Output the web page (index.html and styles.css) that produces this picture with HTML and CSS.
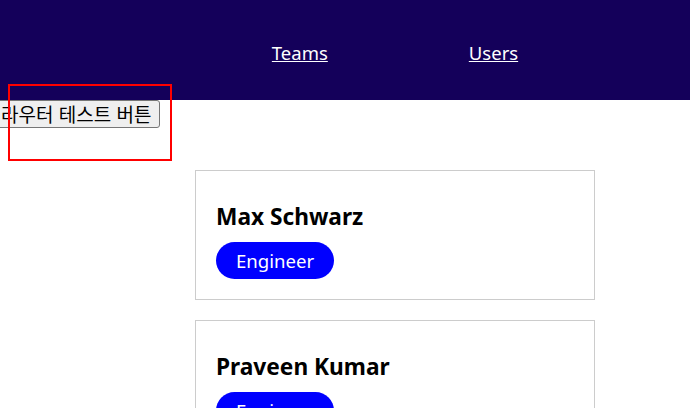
FILE: index.html
```html
<!DOCTYPE html>
<html lang="ko">
<head>
	<meta charset="UTF-8">
	<title>Users</title>
	<link rel="stylesheet" href="styles.css">
</head>
<body>
	<div class="page">
		<header class="header">
			<nav>
				<ul class="nav-list">
					<li><a href="#">Teams</a></li>
					<li><a href="#">Users</a></li>
				</ul>
			</nav>
		</header>
		<button class="test-btn">라우터 테스트 버튼</button>
		<span class="debug-box"></span>
		<ul class="user-list">
			<li class="user-card">
				<h2>Max Schwarz</h2>
				<span class="role">Engineer</span>
			</li>
			<li class="user-card">
				<h2>Praveen Kumar</h2>
				<span class="role">Engineer</span>
			</li>
		</ul>
	</div>
</body>
</html>
```

FILE: styles.css
```css
*{
	margin: 0;
	padding: 0;
	box-sizing: border-box;
}
html{
	overflow: hidden;
}
body{
	font-family: "Noto Sans", "Noto Sans CJK KR", sans-serif;
	color: #000;
	background: #fff;
}
.page{
	width: 790px;
	position: relative;
}
.header{
	height: 100px;
	background-color: #14005a;
	display: flex;
	justify-content: center;
	align-items: center;
}
.nav-list{
	list-style: none;
	display: flex;
	gap: 141px;
	padding-top: 4px;
}
.nav-list a{
	color: #fff;
	font-size: 18.5px;
	text-decoration: underline;
}
.test-btn{
	display: block;
	margin-left: -8px;
	font-family: "Noto Sans CJK KR", sans-serif;
	font-size: 19px;
	line-height: 24px;
	padding: 1px 8px;
	border: 1px solid #767676;
	border-radius: 3px;
	background-color: #efefef;
	color: #000;
}
.debug-box{
	position: absolute;
	left: 8px;
	top: 84px;
	width: 164px;
	height: 77px;
	border: 2px solid #ff0000;
}
.user-list{
	list-style: none;
	width: 400px;
	margin: 42px auto 0;
	display: flex;
	flex-direction: column;
	gap: 20px;
}
.user-card{
	border: 1px solid #ccc;
	padding: 20px;
	display: flex;
	flex-direction: column;
	align-items: flex-start;
}
.user-card h2{
	font-size: 22.7px;
	font-weight: 700;
	margin: 10px 0 9px;
	line-height: 32px;
}
.role{
	background-color: #0000ff;
	color: #fff;
	font-size: 18.6px;
	line-height: 37px;
	padding: 0 20px;
	border-radius: 19px;
}
```
